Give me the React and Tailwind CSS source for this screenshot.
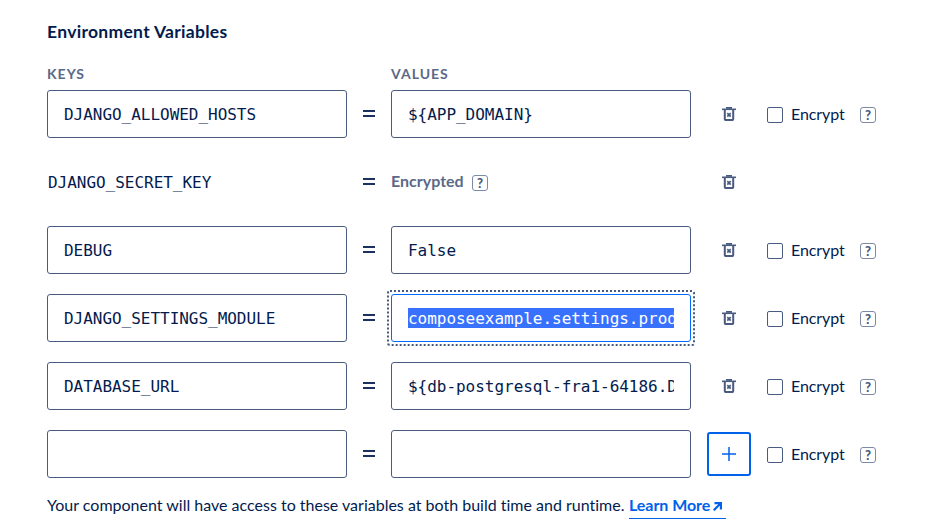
import React from "react";

const rows = [
  { key: "DJANGO_ALLOWED_HOSTS", value: "${APP_DOMAIN}" },
  { key: "DJANGO_SECRET_KEY", secret: true },
  { key: "DEBUG", value: "False" },
  { key: "DJANGO_SETTINGS_MODULE", value: "composeexample.settings.production", focused: true },
  { key: "DATABASE_URL", value: "${db-postgresql-fra1-64186.DATABASE_URL}" },
  { key: "", value: "", add: true },
];

const mono = "font-['DejaVu_Sans_Mono',monospace] text-[16px] tracking-[-0.03px] whitespace-nowrap";

function Help() {
  return (
    <span className="flex size-4 shrink-0 items-center justify-center rounded-[3px] border border-[#7d8aa5] font-['Lato',sans-serif] text-[13px] leading-none font-black text-[#4a5b80]">
      ?
    </span>
  );
}

function Trash() {
  return (
    <svg width="14" height="14" viewBox="0 0 14 14" fill="none" stroke="#4a5b80">
      <path d="M4 .9h6" strokeWidth="1.8" />
      <path d="M0 2.300h14" strokeWidth="1.6" />
      <path d="M2.800 3v9.300q0 .7.7.7h7q.7 0 .7-.7V3" strokeWidth="2" />
      <path d="M5.300 6.200l3.400 3.400M8.700 6.200l-3.400 3.400" strokeWidth="1.7" />
    </svg>
  );
}

function Field({ text, focused }) {
  const frame = focused ? "border-[#0069ff]" : "border-[#4a5b80]";
  const field = (
    <div className={`flex h-12 w-[300px] shrink-0 items-center rounded-[3px] border px-4 ${frame}`}>
      <div className={`overflow-hidden leading-[22px] ${mono}`}>
        <span className={focused ? "block h-5 bg-[#3971ff] text-white" : "block h-5"}>{text}</span>
      </div>
    </div>
  );
  if (!focused) return field;
  return (
    <div className="-m-0.5 shrink-0 rounded-[1px] p-0.5 outline-2 outline-dotted outline-[#4a5b80]">{field}</div>
  );
}

function Row({ row }) {
  return (
    <div className="flex h-12 items-center">
      {row.secret ? <div className={`w-[300px] pt-0.5 pl-px leading-5 ${mono}`}>{row.key}</div> : <Field text={row.key} />}
      <div className="flex h-12 w-11 flex-col items-center justify-center gap-[3px] pb-0.5">
        <span className="h-[2px] w-3 bg-[#1b3160]" />
        <span className="h-[2px] w-3 bg-[#1b3160]" />
      </div>
      {row.secret ? (
        <div className="flex w-[300px] items-center gap-2 pt-0.5">
          <span className="w-[73px] pb-1 text-[16px] leading-5 font-bold whitespace-nowrap text-[#5b6987]">Encrypted</span>
          <Help />
        </div>
      ) : (
        <Field text={row.value} focused={row.focused} />
      )}
      <div className="ml-4 flex w-11 justify-center">
        {row.add ? (
          <div className="flex size-11 items-center justify-center rounded-[3px] border-2 border-[#0061eb]">
            <svg width="14" height="14" viewBox="0 0 14 14" stroke="#0061eb" strokeWidth="1.5">
              <path d="M7 0v14M0 7h14" />
            </svg>
          </div>
        ) : (
          <Trash />
        )}
      </div>
      {!row.secret && (
        <div className="ml-4 flex items-center pt-0.5">
          <span className="size-4 rounded-[2px] border border-[#4a5b80]" />
          <span className="ml-2 w-[69px] pb-0.5 text-[16px] leading-5 tracking-[-0.1px] whitespace-nowrap">Encrypt</span>
          <Help />
        </div>
      )}
    </div>
  );
}

export default function App() {
  return (
    <main className="h-[524px] w-[947px] overflow-hidden bg-white pt-5 pl-[47px] font-['Lato',sans-serif] text-[#031b4e] [font-variant-ligatures:none]">
      <h2 className="h-6 text-[17.500px] leading-6 font-bold tracking-[0.3px]">Environment Variables</h2>
      <div className="mt-5 flex h-5 text-[14px] leading-5 font-bold tracking-[1px] text-[#5b6987]">
        <span className="w-[344px]">KEYS</span>
        <span>VALUES</span>
      </div>
      <div className="mt-1.5 flex flex-col gap-5">
        {rows.map((row) => (
          <Row key={row.key} row={row} />
        ))}
      </div>
      <div className="mt-4 flex h-[25px] text-[16px] leading-[22px] whitespace-nowrap">
        <span className="w-[582px]">Your component will have access to these variables at both build time and runtime.</span>
        <a className="flex h-[25px] w-[97px] border-b border-[#0061eb] font-bold text-[#0061eb]">
          <span className="w-[84px] tracking-[-0.05px]">Learn More</span>
          <svg className="mt-2" width="9" height="9" viewBox="0 0 9 9" fill="none" stroke="#0061eb" strokeWidth="2.2">
            <path d="M1.500 1.100H7.900v6.400M7.800 1.200L.7 8.300" />
          </svg>
        </a>
      </div>
    </main>
  );
}
